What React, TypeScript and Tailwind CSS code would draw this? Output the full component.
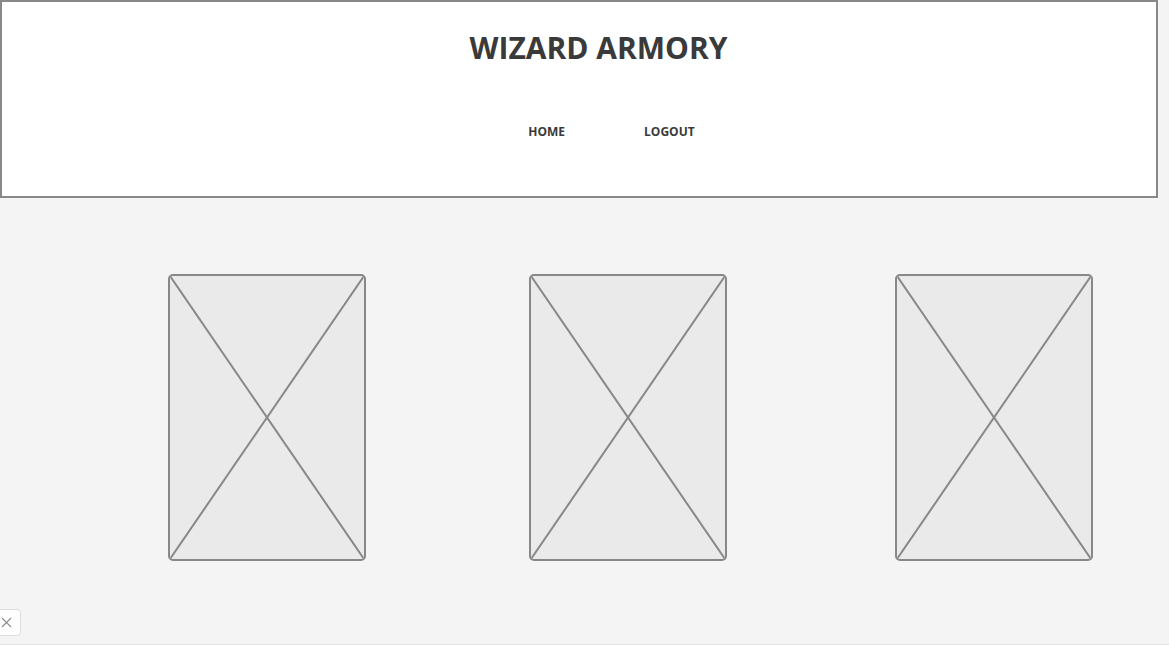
import { X } from "lucide-react";

function Placeholder({ className = "" }: { className?: string }) {
  return (
    <div
      className={`relative w-[198px] h-[287px] shrink-0 rounded-[5px] border-2 border-[#888] bg-[#eaeaea] overflow-hidden ${className}`}
    >
      <svg
        className="absolute inset-0 w-full h-full"
        viewBox="0 0 194 283"
        preserveAspectRatio="none"
      >
        <line x1="0" y1="0" x2="194" y2="283" stroke="#888" strokeWidth="2" />
        <line x1="194" y1="0" x2="0" y2="283" stroke="#888" strokeWidth="2" />
      </svg>
    </div>
  );
}

export default function App() {
  return (
    <div
      className="relative w-[1169px] h-[645px] bg-[#f4f4f4] overflow-hidden border-b border-[#e2e2e2]"
      style={{ fontFamily: '"Open Sans", "Liberation Sans", sans-serif' }}
    >
      {/* Header */}
      <header className="w-[1158px] h-[198px] border-2 border-[#888] bg-white flex flex-col items-center">
        <h1 className="mt-[31px] ml-[39px] text-[30px] leading-none font-bold text-[#3a3a3a]">
          WIZARD ARMORY
        </h1>
        <nav className="mt-[63px] ml-[65px] flex gap-[79px] text-[12px] leading-none font-bold text-[#3a3a3a]">
          <a>HOME</a>
          <a>LOGOUT</a>
        </nav>
      </header>

      {/* Cards */}
      <div className="flex mt-[76px] pl-[168px]">
        <Placeholder />
        <Placeholder className="ml-[163px]" />
        <Placeholder className="ml-[168px]" />
      </div>

      {/* Close button */}
      <button className="absolute left-[-9px] top-[609px] w-[30px] h-[27px] rounded-[4px] border border-[#ddd] bg-white flex items-center justify-center pl-[1px] text-[#8a8a8a]">
        <X size={17} strokeWidth={1.5} />
      </button>
    </div>
  );
}
